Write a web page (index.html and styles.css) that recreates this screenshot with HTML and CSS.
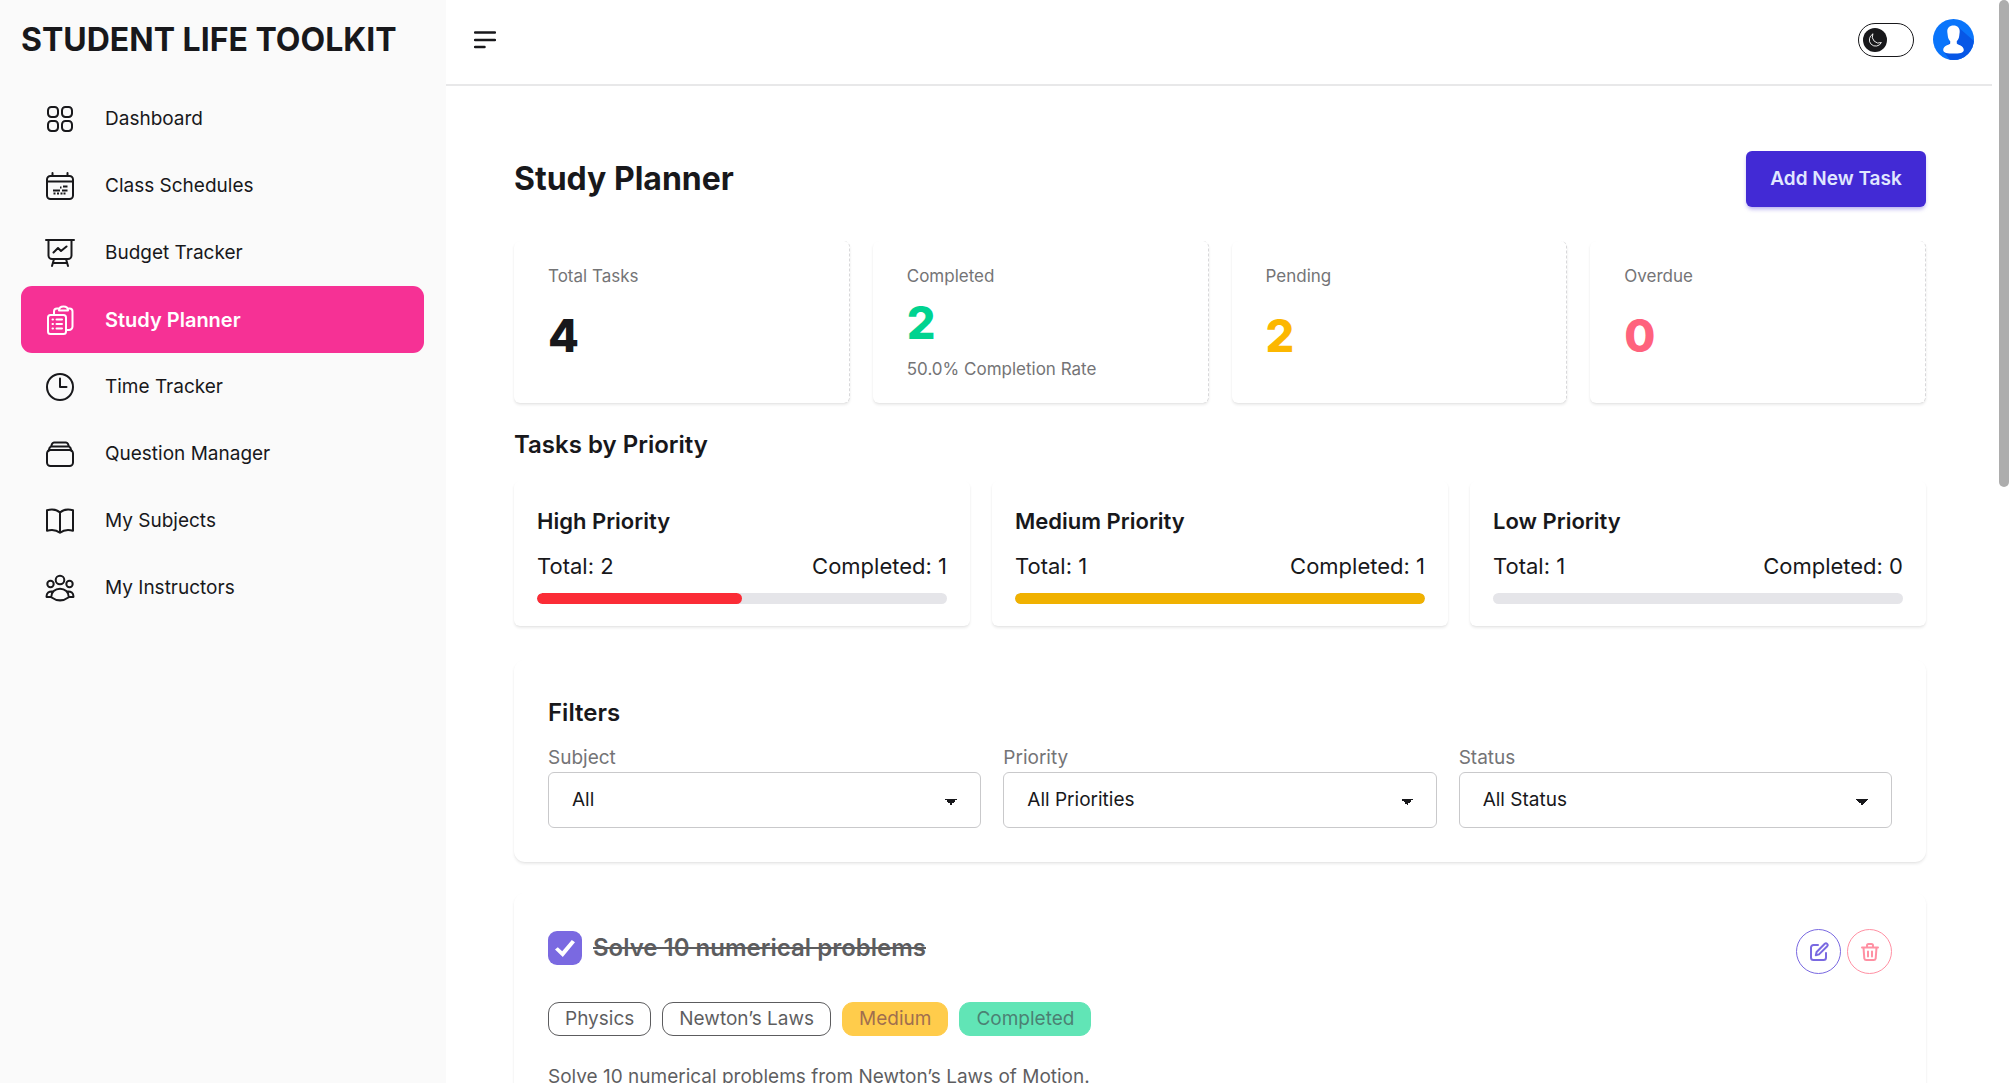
FILE: index.html
```html
<!DOCTYPE html>
<html lang="en">
<head>
<meta charset="utf-8">
<title>Student Life Toolkit</title>
<link rel="stylesheet" href="styles.css">
</head>
<body>
<div class="app">
  <aside class="sidebar">
    <div class="brand">STUDENT LIFE TOOLKIT</div>
    <nav class="nav">
      <a class="nav-item" href="#"><svg class="icon" viewBox="0 0 30 30"><rect x="3" y="3" width="10" height="10" rx="3.4"/><rect x="17" y="3" width="10" height="10" rx="3.4"/><rect x="3" y="17" width="10" height="10" rx="3.4"/><rect x="17" y="17" width="10" height="10" rx="3.4"/></svg>Dashboard</a>
      <a class="nav-item" href="#"><svg class="icon" viewBox="0 0 30 30"><rect x="2" y="5" width="26" height="23" rx="3.5"/><path d="M2 10.5h26M7.500 2v3M22.500 2v3"/><path class="dots" d="M8 19.500h7M15 16.500h1.500M18 15.500h4.500M17 19.500h5.500M8.500 22.500h2M12 22.500h2M15.500 22.500h2M18.500 22.500h2"/></svg>Class Schedules</a>
      <a class="nav-item" href="#"><svg class="icon" viewBox="0 0 30 30"><path d="M1 2h28M3.500 2v15.500a3.500 3.500 0 0 0 3.500 3.500h16a3.500 3.500 0 0 0 3.500-3.500V2M9 21l-2 7M21 21l2 7M8 25h14M8.500 14.500l4.500-4.500 3 3 5.500-4.500"/></svg>Budget Tracker</a>
      <a class="nav-item active" href="#"><svg class="icon" viewBox="0 0 30 30"><rect x="3" y="10" width="18" height="19" rx="2.500"/><path d="M9 9.500V6.500a3 3 0 0 1 3-3h2M23 3.500h1.500a3 3 0 0 1 3 3v15a3.500 3.500 0 0 1-3.500 3.500h-2.500M14 5.500c0-2.500 2-4 4.500-4s4.500 1.500 4.500 4z"/><path d="M7.500 14.500h.5M11.500 14.500h5.500M7.500 19h.5M11.500 19h5.500M7.500 23.500h.5M11.500 23.500h5.500"/></svg>Study Planner</a>
      <a class="nav-item" href="#"><svg class="icon" viewBox="0 0 30 30"><circle cx="15" cy="15" r="13"/><path d="M15 6.500V15h6.500"/></svg>Time Tracker</a>
      <a class="nav-item" href="#"><svg class="icon" viewBox="0 0 30 30"><rect x="2" y="11" width="26" height="16" rx="3.500"/><path d="M3.500 12l1-3a2.500 2.500 0 0 1 2-1.500h17a2.500 2.500 0 0 1 2 1.500l1 3M6 7.500l1-2.500a2.500 2.500 0 0 1 2-1.500h12a2.500 2.500 0 0 1 2 1.500l1 2.500"/></svg>Question Manager</a>
      <a class="nav-item" href="#"><svg class="icon" viewBox="0 0 30 30"><path d="M15 6.500C11.500 3.500 7 2.800 2 4.300v20.400c5-1.500 9.500-.8 13 2.100 3.500-2.900 8-3.600 13-2.100V4.300C23 2.800 18.500 3.500 15 6.500zM15 6.500v20.300"/></svg>My Subjects</a>
      <a class="nav-item" href="#"><svg class="icon" viewBox="0 0 30 30"><circle cx="15" cy="7" r="4.300"/><circle cx="5.500" cy="11" r="3.200"/><circle cx="24.500" cy="11" r="3.200"/><path d="M6.200 24.200C6.200 19 10 15.800 15 15.800s8.800 3.200 8.800 8.400c-5.500 4-12 4-17.600 0zM6.200 24H1.600c-.4-4 2.400-6 6.400-5.500M23.800 24h4.600c.4-4-2.400-6-6.400-5.500"/></svg>My Instructors</a>
    </nav>
  </aside>

  <div class="page">
    <header class="topbar">
      <button class="menu-button" aria-label="Toggle menu"><svg viewBox="0 0 22 20"><path d="M1 2.500h20M1 10h20M1 17h9.500"/></svg></button>
      <div class="topbar-end">
        <button class="theme-toggle" aria-label="Switch theme"><span class="theme-knob"><svg viewBox="0 0 22 22"><path d="M8.500 4.500a7 7 0 1 0 9.500 9.300A7.200 7.200 0 0 1 8.500 4.500z"/></svg></span></button>
        <button class="avatar" aria-label="Account"><svg viewBox="0 0 41 41"><defs><clipPath id="disc"><circle cx="20.500" cy="20.500" r="20.500"/></clipPath></defs><g clip-path="url(#disc)"><rect width="41" height="41" fill="#0a75fb"/><path d="M25 8l16 14v19H17l-6-8z" fill="#0757e6"/><path d="M20.500 6.500c4 0 6.500 2.600 6.200 6.500l-.5 4c-.3 2.500-1.200 4-2.400 5v2.500c.8 1.400 7 2 7 6.500 0 3-4.500 3.500-10.300 3.500s-10.300-.5-10.300-3.500c0-4.500 6.200-5.100 7-6.500V22c-1.200-1-2.100-2.500-2.400-5l-.5-4c-.3-3.900 2.200-6.500 6.200-6.500z" fill="#fff"/></g></svg></button>
      </div>
    </header>

    <main class="content">
      <div class="title-row">
        <h1>Study Planner</h1>
        <button class="add-button">Add New Task</button>
      </div>

      <section class="stats">
        <div class="stat card"><div class="stat-title">Total Tasks</div><div class="stat-value">4</div></div>
        <div class="stat card"><div class="stat-title">Completed</div><div class="stat-value success">2</div><div class="stat-title">50.0% Completion Rate</div></div>
        <div class="stat card"><div class="stat-title">Pending</div><div class="stat-value warning">2</div></div>
        <div class="stat card"><div class="stat-title">Overdue</div><div class="stat-value error">0</div></div>
      </section>

      <h2>Tasks by Priority</h2>
      <section class="priorities">
        <div class="priority card"><h3>High Priority</h3><div class="counts"><span>Total: 2</span><span>Completed: 1</span></div><div class="track"><div class="fill high" style="width:50%"></div></div></div>
        <div class="priority card"><h3>Medium Priority</h3><div class="counts"><span>Total: 1</span><span>Completed: 1</span></div><div class="track"><div class="fill medium" style="width:100%"></div></div></div>
        <div class="priority card"><h3>Low Priority</h3><div class="counts"><span>Total: 1</span><span>Completed: 0</span></div><div class="track"><div class="fill low" style="width:0%"></div></div></div>
      </section>

      <section class="filters card">
        <h2>Filters</h2>
        <div class="filter-row">
          <div class="field"><label for="subject">Subject</label><select id="subject"><option>All</option></select></div>
          <div class="field"><label for="priority">Priority</label><select id="priority"><option>All Priorities</option></select></div>
          <div class="field"><label for="status">Status</label><select id="status"><option>All Status</option></select></div>
        </div>
      </section>

      <article class="task card">
        <div class="task-body">
          <div class="task-head">
            <input type="checkbox" id="task-1" class="task-check" checked>
            <label for="task-1" class="task-title">Solve 10 numerical problems</label>
            <div class="task-actions">
              <button class="round edit" aria-label="Edit task"><svg viewBox="0 0 20 20"><path d="M9 3H4.500A2.500 2.500 0 0 0 2 5.500v10A2.500 2.500 0 0 0 4.500 18h10a2.500 2.500 0 0 0 2.500-2.500V11M15.800 1.800a1.700 1.700 0 0 1 2.400 2.400L10 12.400l-3.200.8.800-3.200z"/></svg></button>
              <button class="round delete" aria-label="Delete task"><svg viewBox="0 0 20 20"><path d="M2 5.500h16M3.500 5.500l.8 11a2 2 0 0 0 2 1.500h7.400a2 2 0 0 0 2-1.500l.8-11M7 5.500V3.500A1.500 1.500 0 0 1 8.500 2h3A1.500 1.500 0 0 1 13 3.500v2M8 9.500v5M12 9.500v5"/></svg></button>
            </div>
          </div>
          <div class="badges"><span class="badge">Physics</span><span class="badge">Newton’s Laws</span><span class="badge warn">Medium</span><span class="badge done">Completed</span></div>
          <p class="task-text">Solve 10 numerical problems from Newton’s Laws of Motion.</p>
        </div>
      </article>
    </main>
  </div>
  <div class="scroll-rail"><div class="scroll-thumb"></div></div>
</div>
</body>
</html>
```
FILE: styles.css
```css
*, *::before, *::after { box-sizing: border-box; }
body, h1, h2, h3, p { margin: 0; }
body {
  font-family: Inter, "Liberation Sans", sans-serif;
  font-size: 19px;
  line-height: 30px;
  color: #18181b;
  background: #fff;
  overflow: hidden;
}
button, select, input { font: inherit; color: inherit; margin: 0; }
button { padding: 0; border: 0; background: none; cursor: pointer; }
svg { display: block; fill: none; stroke: currentColor; stroke-width: 2; stroke-linecap: round; stroke-linejoin: round; }

.app { display: grid; grid-template-columns: 446px minmax(0, 1fr) 22px; height: 100vh; }

.sidebar { background: #fafafa; padding: 0 22px 0 21px; }
.brand { height: 84px; padding-top: 20px; font-size: 32px; line-height: 40px; font-weight: 700; white-space: nowrap; }
.nav { padding-top: 1px; }
.nav-item {
  display: flex; align-items: center; gap: 30px; height: 67px; padding-left: 24px;
  border-radius: 11px; color: #18181b; text-decoration: none;
}
.nav-item.active { background: #f63195; color: #fff; font-size: 20px; font-weight: 600; }
.icon { width: 30px; height: 30px; }
.icon .dots { stroke-width: 1.8; stroke-linecap: butt; }

.page { min-width: 0; overflow: hidden; }
.topbar {
  display: flex; align-items: center; justify-content: space-between;
  height: 86px; padding: 0 18px 5px 28px; border-bottom: 2px solid #e8e8e9;
}
.menu-button svg { width: 22px; height: 20px; stroke-width: 2.5; }
.topbar-end { display: flex; align-items: center; gap: 19px; }
.theme-toggle { width: 56px; height: 34px; padding: 0 4px; border: 1px solid #18181b; border-radius: 17px; }
.theme-knob { display: block; width: 24px; height: 24px; padding: 2px; border-radius: 50%; background: #18181b; color: #fff; }
.theme-knob svg { stroke-width: 1; }
.avatar { width: 41px; height: 41px; }
.avatar svg { stroke: none; }

.content { padding: 65px 66px 67px 68px; }
.title-row { display: flex; align-items: center; justify-content: space-between; margin-bottom: 34px; }
h1 { font-size: 32px; line-height: 40px; font-weight: 700; }
h2 { font-size: 24px; line-height: 38px; font-weight: 600; }
h3 { font-size: 22px; line-height: 34px; font-weight: 600; }
.add-button {
  width: 180px; height: 56px; border-radius: 6px; background: #422ad5; color: #e0e7ff;
  font-weight: 600; box-shadow: 0 3px 4px -1px #422ad566;
}

.card { background: #fff; border-radius: 6px; box-shadow: 0 2px 3px #00000014, 0 1px 2px -1px #0000001a; }
.stats { display: grid; grid-template-columns: repeat(4, 1fr); gap: 23px; margin-bottom: 23px; }
.stat { display: grid; grid-template-rows: 25px 1fr auto; align-items: center; height: 162px; padding: 23px 34px 21px; border-right: 1px dashed #d8d8da; }
.stat-title { font-size: 17px; line-height: 25px; color: #747476; }
.stat-value { font-size: 45px; line-height: 54px; font-weight: 800; }
.success { color: #00d390; }
.warning { color: #fcb700; }
.error { color: #ff627d; }

.priorities { display: grid; grid-template-columns: repeat(3, 1fr); gap: 22px; margin: 17px 0 34px; }
.priority { padding: 23px 23px 22px; }
.counts { display: flex; justify-content: space-between; margin: 11px 0 10px; font-size: 22px; line-height: 34px; }
.track { height: 11px; border-radius: 6px; background: #e5e5e9; overflow: hidden; }
.fill { height: 100%; border-radius: 6px; }
.high { background: #fb2c36; }
.medium { background: #f0b100; }

.filters { padding: 34px; border-radius: 11px; }
.filter-row { display: grid; grid-template-columns: repeat(3, 1fr); gap: 22px; margin-top: 12px; }
.field { display: flex; flex-direction: column; }
.field label { color: #747476; line-height: 28px; }
.field select {
  appearance: none; height: 56px; padding: 0 23px; border: 1px solid #c9c9cb; border-radius: 6px;
  background: linear-gradient(45deg, transparent 50%, #18181b 50%) right 29px top 26px / 6px 6px no-repeat,
    linear-gradient(135deg, #18181b 50%, transparent 50%) right 23px top 26px / 6px 6px no-repeat, #fff;
}

.task { margin-top: 31px; padding: 34px; border-radius: 11px; }
.task-body { opacity: .7; }
.task-head { display: flex; align-items: flex-start; gap: 11px; height: 75px; }
.task-check {
  appearance: none; width: 34px; height: 34px; margin-top: 4px; border-radius: 9px;
  background: #422ad5; display: grid; place-items: center;
}
.task-check::before { content: ""; width: 20px; height: 18px; background: #fff; clip-path: polygon(0 58%, 14% 46%, 36% 68%, 84% 6%, 100% 18%, 39% 100%); }
.task-title { font-size: 24px; line-height: 42px; font-weight: 600; text-decoration: line-through; }
.task-actions { display: flex; gap: 6px; margin: 2px 0 0 auto; }
.round { width: 45px; height: 45px; display: grid; place-items: center; border: 1px solid; border-radius: 50%; }
.round svg { width: 20px; height: 20px; }
.edit { color: #422ad5; }
.delete { color: #ff627d; }
.badges { display: flex; gap: 11px; }
.badge { height: 34px; padding: 0 16px; border: 1px solid #18181b; border-radius: 11px; line-height: 32px; }
.badge.warn { background: #ffb700; border-color: #ffb700; color: #793205; }
.badge.done { background: #1fdb98; border-color: #1fdb98; color: #004c39; }
.task-text { margin-top: 26px; }

.scroll-rail { padding: 0 5px 0 7px; }
.scroll-thumb { height: 45%; background: #adadad; border-radius: 5px; }
```
